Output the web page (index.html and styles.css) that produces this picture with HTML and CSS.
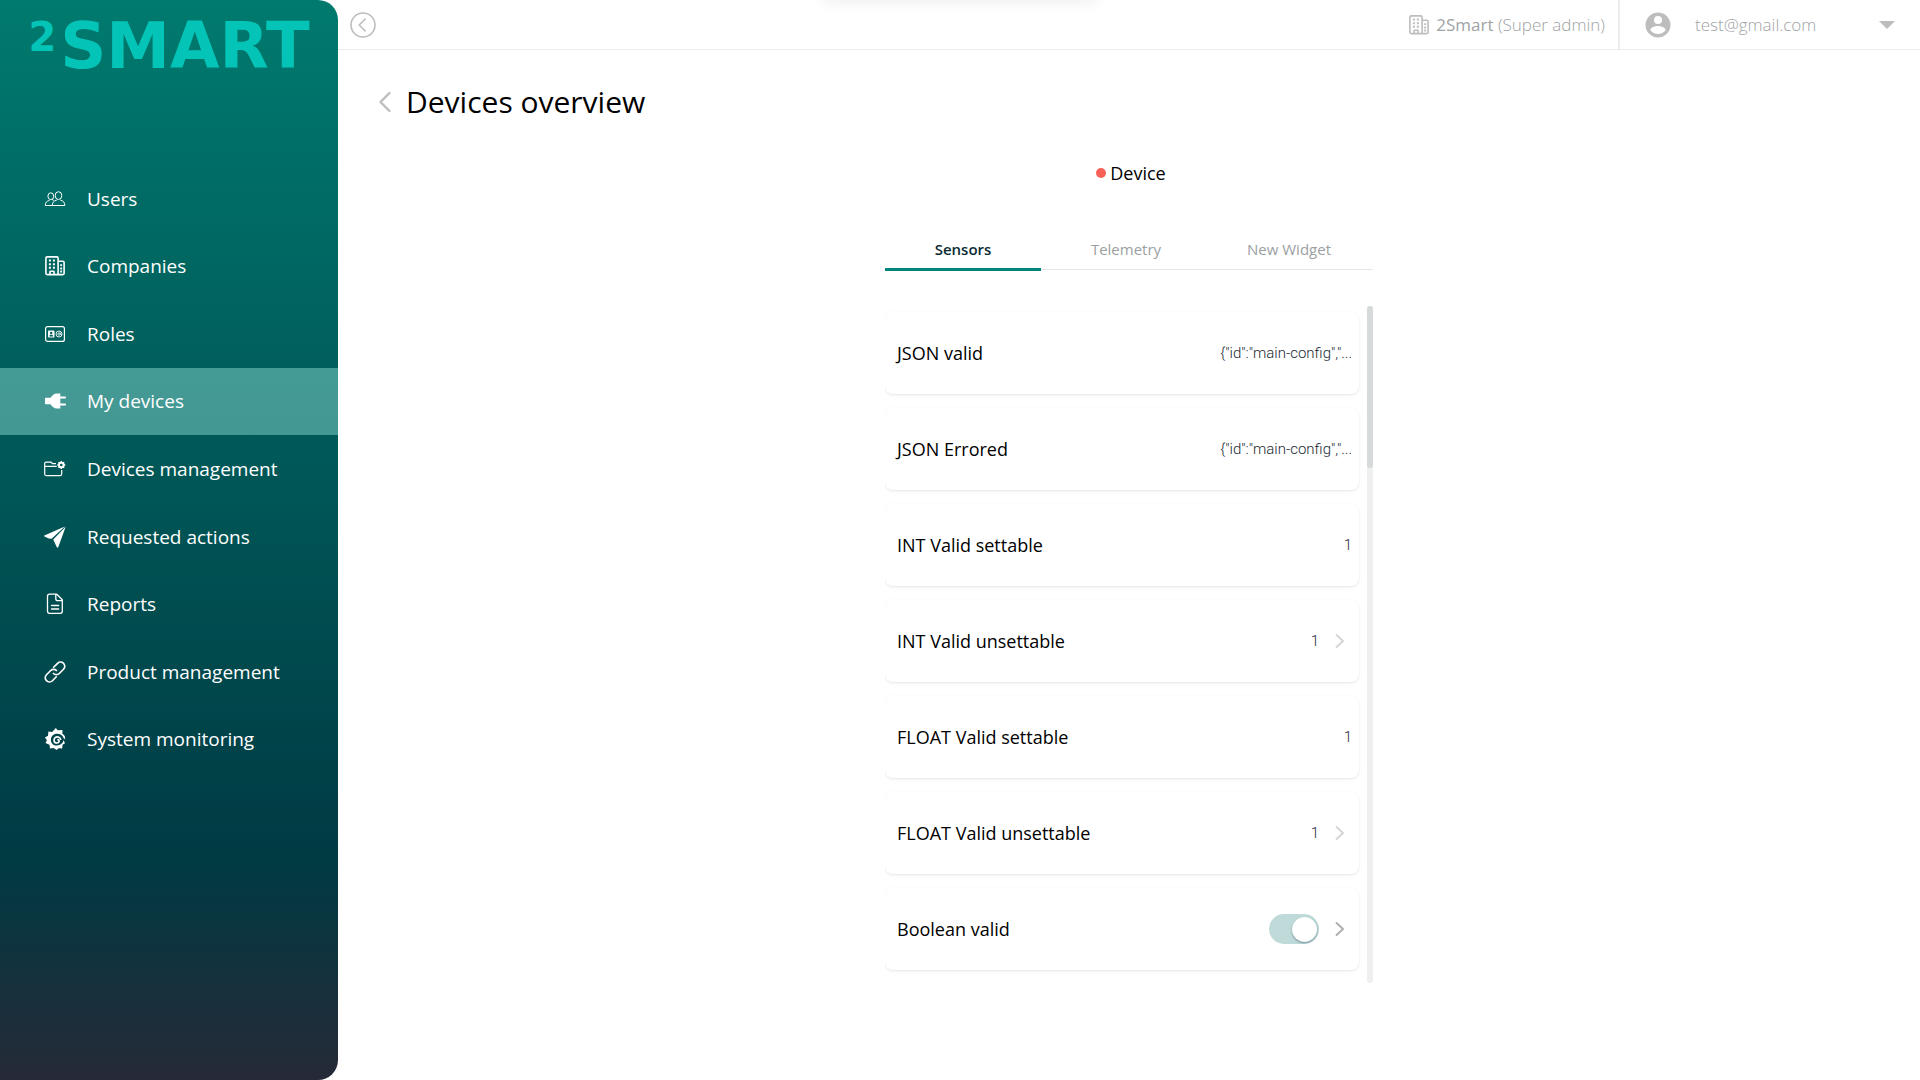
FILE: index.html
```html
<!DOCTYPE html>
<html lang="en">
<head>
<meta charset="utf-8">
<meta name="viewport" content="width=device-width, initial-scale=1">
<title>Devices overview</title>
<link rel="stylesheet" href="styles.css">
</head>
<body>
<svg class="sprite" aria-hidden="true">
  <symbol id="building" viewBox="0 0 20 20">
    <g fill="none" stroke="currentColor" stroke-width="1.6" stroke-linejoin="round">
      <path d="M.9 17.6V2.2Q.9.9 2.2.9h9.6q1.300 0 1.300 1.300v16.400H2.200Q.9 18.600.9 17.600zM13.100 5.300h4.700q1.300 0 1.300 1.300v11q0 1-1.300 1h-4.700M5 18.400v-2.600q0-.6.6-.6h2.900q.6 0 .6.6v2.600"/>
    </g>
    <path fill="currentColor" d="M3.900 3.600h2v2h-2zM7.900 3.600h2v2h-2zM3.900 7.200h2v2h-2zM7.900 7.200h2v2h-2zM3.900 10.800h2v2h-2zM7.900 10.800h2v2h-2zM15.200 8.200h1.900v1.900h-1.900zM15.200 11.500h1.900v1.900h-1.900zM15.200 14.600h1.900v1.900h-1.900z"/>
  </symbol>
  <symbol id="chevron-right" viewBox="0 0 10 16">
    <path d="M1.600 2 8 8l-6.400 6" fill="none" stroke="currentColor" stroke-width="2" stroke-linecap="round" stroke-linejoin="round"/>
  </symbol>
</svg>

<div class="toast" aria-hidden="true"></div>

<div class="app">
  <aside class="sidebar">
    <a class="logo" href="#"><span class="logo-two">2</span>SMART</a>
    <nav class="menu">
      <a class="menu-item" href="#">
        <svg class="menu-icon" viewBox="0 0 22 22" fill="none" stroke="currentColor" stroke-width="1">
          <ellipse cx="6.800" cy="8.200" rx="2.900" ry="3.400"/><ellipse cx="14.500" cy="7.600" rx="3.300" ry="3.900"/>
          <path d="M8 17.500H1.300c0-3.100 1.500-4.600 4.200-5M8.200 11.600q1 .3 1.600.9M8.300 17.500c0-3.200 1.500-4.700 4.400-5.300M16.400 12.200c2.900.6 4.400 2.100 4.400 5.300H8.300"/>
        </svg>
        Users
      </a>
      <a class="menu-item" href="#">
        <svg class="menu-icon" viewBox="-1 -1 22 22"><use href="#building" width="20" height="20"/></svg>
        Companies
      </a>
      <a class="menu-item" href="#">
        <svg class="menu-icon" viewBox="0 0 22 22" fill="none" stroke="currentColor">
          <rect x="1.600" y="3.600" width="18.800" height="14.800" rx="2" stroke-width="1.200"/>
          <rect x="4" y="7.500" width="6.500" height="7" rx=".8" fill="currentColor" stroke="none"/>
          <circle cx="7.200" cy="9.900" r="1.200" fill="#015f5b" stroke="none"/><path d="M5.300 13.400q.1-1.800 1.900-1.800t1.900 1.800z" fill="#015f5b" stroke="none"/>
          <circle cx="15" cy="11" r="3" stroke-width=".9"/><circle cx="15" cy="11" r="1.200" stroke-width=".8"/><path d="M16.300 9.500v1.700q.5 1.300 1.600.3" stroke-width=".7"/>
        </svg>
        Roles
      </a>
      <a class="menu-item menu-item-active" href="#" aria-current="page">
        <svg class="menu-icon" viewBox="0 0 22 22" fill="currentColor">
          <path d="M1 8.500q0-.7.700-.7h4.800C8.300 5.500 10 3.500 12.800 3.500h3.500v3.100h5q.7 0 .7 1t-.7 1h-5v4.800h5q.7 0 .7 1t-.7 1h-5v3.100h-3.500c-2.800 0-4.500-2-6.300-4.300H1.700q-.7 0-.7-.7z"/>
        </svg>
        My devices
      </a>
      <a class="menu-item" href="#">
        <svg class="menu-icon" viewBox="0 0 22 22" fill="none" stroke="currentColor" stroke-width="1.200">
          <path d="M12 5.700H8.600L7 4.200H2.100Q.7 4.200.7 5.600v10.500q0 1.500 1.500 1.500h14q1.500 0 1.500-1.500V12M.7 8.400h12"/>
          <circle cx="17.300" cy="7" r="2.300" stroke-width="1.900"/>
          <path d="M17.300 3v1.300M17.300 9.700V11M13.300 7h1.300M20 7h1.300M14.500 4.200l.9.900M19.200 8.900l.9.900M20.100 4.200l-.9.900M15.400 8.900l-.9.900" stroke-width="1.500"/>
        </svg>
        Devices management
      </a>
      <a class="menu-item" href="#">
        <svg class="menu-icon" viewBox="0 0 22 22" fill="currentColor">
          <path d="M.3 9.400 20.900.4 7.600 12.800 4.800 12.600.4 10.400Q-.3 9.800.3 9.400zM21.700.8l-7.400 20.200q-.7 1.400-1.600.1L9.200 13.600z"/>
        </svg>
        Requested actions
      </a>
      <a class="menu-item" href="#">
        <svg class="menu-icon" viewBox="0 0 22 22" fill="none" stroke="currentColor" stroke-width="1.300" stroke-linecap="round" stroke-linejoin="round">
          <path d="M5.500 1.200h7.200l5.600 5.600v11.500q0 2-2 2H5.500q-2 0-2-2V3.200q0-2 2-2zM11.800 1.500v4.200q0 2 2 2h4.300M7.500 12.500h7.200M7.500 16h7.200"/>
        </svg>
        Reports
      </a>
      <a class="menu-item" href="#">
        <svg class="menu-icon" viewBox="0 0 24 24" fill="none" stroke="currentColor" stroke-width="1.800" stroke-linecap="round" stroke-linejoin="round">
          <path d="m10.500 6.800 4.300-4.300a4.500 4.500 0 0 1 6.500 6.500l-4.600 4.600a4.500 4.500 0 0 1-6.400 0"/>
          <path d="m13.400 17.200-4.200 4.300a4.500 4.500 0 0 1-6.500-6.500l4.600-4.600a4.500 4.500 0 0 1 6.400 0"/>
        </svg>
        Product management
      </a>
      <a class="menu-item" href="#">
        <svg class="menu-icon" viewBox="0 0 22 22" fill="none" stroke="currentColor" stroke-linecap="round">
          <path fill="currentColor" stroke="none" fill-rule="evenodd" d="M11.800 0l1.900 2.300 4.800-.4-.2 3.500L20.800 8l.4 3.600-1.700-1.600C18.500 7.200 16 5.800 13 5.800 9.300 5.800 6.900 8.500 6.900 11.700c0 3.500 2.600 5.800 5.700 5.800 3.800 0 6.500-2.200 6.900-5.400l1.500 3.100-2.400 1.600-.5 3.700-3.500-.3-2 1.800-3-2-3.600.5-.5-3.800L1.500 15l1.400-2.800L1 9.500l3-1.700.4-4.300 3.800.4z"/>
          <path stroke-width="1.700" d="M16.600 11.200C15.900 8.800 13 8.200 11.200 9.600 9.100 11.300 9.800 15 12.800 15c2.600 0 3-2.900 1.200-3.300"/>
        </svg>
        System monitoring
      </a>
    </nav>
  </aside>

  <div class="content">
    <header class="topbar">
      <button class="icon-button collapse" type="button" aria-label="Collapse menu">
        <svg width="26" height="26" viewBox="0 0 26 26" fill="none" stroke="currentColor" stroke-linecap="round" stroke-linejoin="round"><circle cx="13" cy="13" r="12" stroke-width="1.600"/><path d="m15.200 7-6 6 6 6" stroke-width="1.600"/></svg>
      </button>
      <div class="company">
        <svg width="22" height="20" viewBox="0 0 20 20"><use href="#building" width="20" height="20"/></svg>
        <span><span class="company-name">2Smart</span> (Super admin)</span>
      </div>
      <button class="account" type="button">
        <svg width="26" height="26" viewBox="0 0 26 26"><path fill="currentColor" fill-rule="evenodd" d="M13 .5a12.500 12.500 0 1 0 0 25 12.500 12.500 0 0 0 0-25zM13 4a4 4 0 1 1 0 8 4 4 0 0 1 0-8zm0 18c-3.200 0-6-1.500-7.600-4 .1-2.500 5.100-3.900 7.600-3.900s7.500 1.400 7.600 3.900c-1.600 2.500-4.400 4-7.600 4z"/></svg>
        <span class="account-mail">test@gmail.com</span>
        <svg width="16" height="8" viewBox="0 0 16 8"><path fill="currentColor" d="M0 0h16L8 8z"/></svg>
      </button>
    </header>

    <main class="main">
      <div class="heading">
        <button class="icon-button" type="button" aria-label="Back">
          <svg width="14" height="22" viewBox="0 0 14 22" fill="none" stroke="currentColor" stroke-width="2.400" stroke-linecap="round" stroke-linejoin="round"><path d="m11.500 2-9 9 9 9"/></svg>
        </button>
        <h1>Devices overview</h1>
      </div>

      <section class="device">
        <h2 class="device-name"><span class="status"></span>Device</h2>

        <div class="tabs" role="tablist">
          <button class="tab tab-active" type="button" role="tab" aria-selected="true">Sensors</button>
          <button class="tab" type="button" role="tab" aria-selected="false">Telemetry</button>
          <button class="tab" type="button" role="tab" aria-selected="false">New Widget</button>
        </div>

        <div class="panel">
          <ul class="sensors">
            <li class="sensor"><span class="sensor-name">JSON valid</span><span class="value">{"id":"main-config","...</span></li>
            <li class="sensor"><span class="sensor-name">JSON Errored</span><span class="value">{"id":"main-config","...</span></li>
            <li class="sensor"><span class="sensor-name">INT Valid settable</span><span class="value">1</span></li>
            <li class="sensor sensor-link"><span class="sensor-name">INT Valid unsettable</span><span class="value">1</span><svg class="arrow" width="10" height="16"><use href="#chevron-right"/></svg></li>
            <li class="sensor"><span class="sensor-name">FLOAT Valid settable</span><span class="value">1</span></li>
            <li class="sensor sensor-link"><span class="sensor-name">FLOAT Valid unsettable</span><span class="value">1</span><svg class="arrow" width="10" height="16"><use href="#chevron-right"/></svg></li>
            <li class="sensor sensor-link"><label class="sensor-name" for="boolean-valid">Boolean valid</label><input class="switch" id="boolean-valid" type="checkbox" checked><svg class="arrow arrow-dark" width="10" height="16"><use href="#chevron-right"/></svg></li>
          </ul>
          <div class="scrollbar"><div class="scrollbar-thumb"></div></div>
        </div>
      </section>
    </main>
  </div>
</div>
</body>
</html>
```
FILE: styles.css
```css
* { box-sizing: border-box; }

body {
  margin: 0;
  background: #fff;
  color: #000;
  font-family: "Open Sans", sans-serif;
  font-size: 18px;
}

button {
  border: 0;
  padding: 0;
  background: none;
  font: inherit;
  cursor: pointer;
}

a { color: inherit; text-decoration: none; }
svg { display: block; flex: none; }
.sprite { position: absolute; width: 0; height: 0; }

/* Notification parked just above the window; only its shadow shows */
.toast {
  position: absolute;
  top: -20px;
  left: 50%;
  width: 272px;
  height: 20px;
  margin-left: -136px;
  box-shadow: 0 0 16px rgba(38, 50, 56, .1);
}

.app { display: flex; min-height: 100vh; }

/* Sidebar */
.sidebar {
  flex: 0 0 338px;
  border-radius: 0 20px 20px 0;
  background: linear-gradient(180deg, #007a6e 0%, #003a43 80%, #262937 100%);
  color: #fff;
}

.logo {
  display: flex;
  justify-content: center;
  gap: 4px;
  height: 165px;
  padding-top: 16px;
  color: #04c4b7;
  font: 900 64px/60px "DejaVu Sans", sans-serif;
}

.logo-two { font-size: 40px; line-height: 42px; }

.menu {
  display: grid;
  grid-auto-rows: 1fr;
  height: 608px;
}

.menu-item {
  display: flex;
  align-items: center;
  gap: 21px;
  padding-left: 44px;
  font-size: 19px;
  font-weight: 500;
}

.menu-icon { width: 22px; height: 22px; }
.menu-item-active { background: rgba(170, 244, 237, .4); }

/* Top bar */
.content { flex: 1; min-width: 0; }

.topbar {
  display: flex;
  align-items: center;
  height: 50px;
  border-bottom: 1px solid #ececec;
  color: #a0a3a5;
  font-size: 17px;
  font-weight: 300;
}

.icon-button { color: #bdbdbd; }
.collapse { margin: 0 auto 0 12px; }

.company {
  display: flex;
  align-items: center;
  gap: 6px;
  margin-right: 13px;
}

.company svg, .account svg { color: #bdbdbd; }
.company-name { font-weight: 500; }

.account {
  display: flex;
  align-items: center;
  align-self: stretch;
  width: 302px;
  padding: 0 25px;
  border-left: 2px solid #ececec;
  color: #a0a3a5;
}

.account-mail { flex: 1; padding-left: 24px; text-align: left; }

/* Page */
.heading {
  display: flex;
  align-items: center;
  gap: 14px;
  padding: 32px 40px 0;
}

h1 {
  margin: 0;
  font-size: 30px;
  font-weight: 400;
  line-height: 40px;
}

.device { width: 488px; margin: 38px auto 0; }

.device-name {
  display: flex;
  align-items: center;
  justify-content: center;
  gap: 4px;
  margin: 0;
  padding-left: 4px;
  font-size: 18px;
  font-weight: 400;
  line-height: 26px;
}

.status {
  width: 10px;
  height: 10px;
  border-radius: 50%;
  background: #f96157;
}

.tabs {
  display: grid;
  grid-template-columns: repeat(3, 1fr);
  column-gap: 7px;
  margin-top: 46px;
  padding-right: 6px;
  border-bottom: 1px solid #e6e8e8;
}

.tab {
  height: 39px;
  margin-bottom: -2px;
  padding-bottom: 2px;
  border-bottom: 3px solid transparent;
  color: #9b9fa1;
  font-size: 15px;
  font-weight: 500;
}

.tab-active {
  border-color: #00857b;
  color: #0a2a33;
  font-weight: 600;
}

.panel { display: flex; margin-top: 36px; }

.sensors {
  flex: 1;
  display: grid;
  gap: 14px;
  margin: 0;
  padding: 6px 8px 13px 0;
  overflow: hidden;
  list-style: none;
}

.sensor {
  display: flex;
  align-items: center;
  height: 82px;
  padding: 0 7px 0 12px;
  border-radius: 8px;
  background: #fff;
  box-shadow: 0 1px 3px rgba(0, 0, 0, .1);
}

.sensor-link { gap: 16px; padding-right: 14px; }
.sensor-name { flex: 1; }

.value {
  color: #1a2a33;
  font: 300 15px/20px Roboto, sans-serif;
}

.arrow { color: #d6d6d6; }
.arrow-dark { color: #b0b0b0; }

.switch {
  appearance: none;
  width: 50px;
  height: 30px;
  margin: 0;
  padding: 3px;
  border-radius: 15px;
  background: #bfdbd9;
}

.switch::before {
  content: "";
  display: block;
  width: 25px;
  height: 25px;
  border-radius: 50%;
  background: #fff;
  box-shadow: 0 1px 2px rgba(20, 60, 80, .5);
}

.switch:checked::before { margin-left: 20px; }

.scrollbar {
  width: 6px;
  border-radius: 3px;
  background: #efefef;
}

.scrollbar-thumb {
  height: 24%;
  border-radius: 3px;
  background: #d6dada;
}
```
